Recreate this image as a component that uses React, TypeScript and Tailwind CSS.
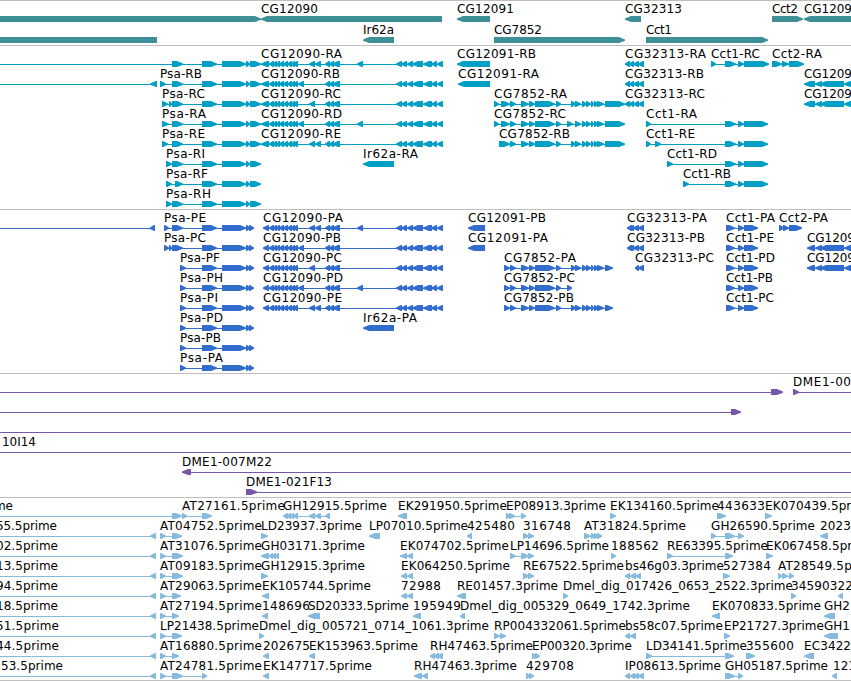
type Direction = "left" | "right" | "none";

interface Feature {
    label?: string;
    // label start and label end, in pixels of the view
    at?: [number, number];
    dir: Direction;
    blocks: number[][];
    // extent of the intron line, when it runs past the blocks
    span?: [number, number];
}

interface TrackProps {
    rows: Feature[][];
    color: string;
    rowHeight: string;
    className?: string;
}

const VIEW_WIDTH = 851;

const f = (label: string, start: number, end: number, dir: Direction, blocks: number[][], span?: [number, number]): Feature => ({
    label, at: [start, end], dir, blocks, span,
});

const bare = (dir: Direction, blocks: number[][], span?: [number, number]): Feature => ({ dir, blocks, span });

// ---- shared exon sets ----
const psaTail = [[202, 217], [222, 246], [246, 250], [250, 261]];
const psaCds = [[202, 217], [222, 246], [246, 250], [249, 254]];
const cgHead = [[269, 274], [273, 277], [276, 280], [279, 284], [283, 288], [287, 292], [291, 295], [293, 298]];
const cgMid = [[325, 330], [329, 334], [332, 340]];
const cgTail = [[396, 402], [401, 407], [407, 413], [412, 423], [423, 432], [431, 437], [437, 443]];
const cgA = [...cgHead, [309, 315], [315, 321], ...cgMid, [357, 363], ...cgTail];
const cgB = [...cgHead, [298, 304], ...cgMid, ...cgTail];
const cgC = [...cgHead, [309, 315], ...cgMid, ...cgTail];
const cgD = [...cgHead, [298, 304], ...cgMid, [357, 363], ...cgTail];
const cgE = [...cgHead, [309, 315], [315, 321], ...cgMid, ...cgTail];
const cg7852Mid = [[510, 516], [521, 529], [529, 535], [535, 555], [556, 561]];
const cg7852Tail = [[575, 581], [582, 587], [586, 591], [591, 594], [594, 598], [597, 604]];
const cg32313 = [[625, 630], [629, 634], [633, 639], [638, 644]];
const cct1Tail = [[725, 736], [738, 744], [744, 768]];
const cct1Cds = [[726, 735], [738, 744], [744, 758]];
const cg1209 = [[815, 822], [820, 844], [844, 856]];

const genes: Feature[][] = [
    [
        bare("right", [[-10, 261]]),
        f("CG12090", 261, 318, "left", [[261, 442]]),
        f("CG12091", 457, 514, "left", [[457, 490]]),
        f("CG32313", 625, 682, "left", [[625, 641]]),
        f("Cct2", 772, 798, "right", [[772, 803]]),
        f("CG1209", 804, 852, "left", [[804, 870]]),
    ],
    [
        bare("none", [[-10, 157]]),
        f("Ir62a", 363, 394, "left", [[363, 394]]),
        f("CG7852", 494, 542, "right", [[494, 625]]),
        f("Cct1", 646, 672, "right", [[646, 768]]),
    ],
];

const transcripts: Feature[][] = [
    [
        bare("right", [[172, 183], ...psaTail], [-5, 261]),
        f("CG12090-RA", 261, 342, "left", [[261, 269], ...cgA]),
        f("CG12091-RB", 457, 536, "left", [[457, 490]]),
        f("CG32313-RA", 625, 706, "left", cg32313),
        f("Cct1-RC", 711, 760, "right", [[711, 716], [725, 736], [738, 744], [744, 769]]),
        f("Cct2-RA", 772, 822, "right", [[772, 782], [782, 789], [789, 804]]),
    ],
    [
        bare("left", [[150, 157]], [-5, 157]),
        f("Psa-RB", 160, 202, "right", [[160, 166], [172, 183], ...psaTail]),
        f("CG12090-RB", 261, 340, "left", [[261, 269], ...cgB]),
        f("CG12091-RA", 458, 539, "left", [[458, 490]]),
        f("CG32313-RB", 625, 704, "left", cg32313),
        f("CG1209", 804, 852, "left", [[804, 815], ...cg1209]),
    ],
    [
        f("Psa-RC", 162, 205, "right", [[162, 168], [169, 172], [172, 183], ...psaTail]),
        f("CG12090-RC", 261, 341, "left", [[261, 269], ...cgC]),
        f("CG7852-RA", 494, 567, "right", [[494, 499], [501, 510], ...cg7852Mid, [571, 576], ...cg7852Tail, [605, 625]]),
        f("CG32313-RC", 625, 705, "left", cg32313),
        f("CG1209", 804, 852, "left", [[804, 815], ...cg1209]),
    ],
    [
        f("Psa-RA", 162, 206, "right", [[162, 169], [172, 183], ...psaTail]),
        f("CG12090-RD", 261, 342, "left", [[261, 269], ...cgD]),
        f("CG7852-RC", 494, 566, "right", [[494, 499], [501, 510], ...cg7852Mid, [567, 573], ...cg7852Tail, [605, 625]]),
        f("Cct1-RA", 646, 697, "right", [[646, 651], ...cct1Tail]),
    ],
    [
        f("Psa-RE", 162, 205, "right", [[162, 168], [172, 183], ...psaTail]),
        f("CG12090-RE", 261, 341, "left", [[261, 269], ...cgE]),
        f("CG7852-RB", 499, 570, "right", [[499, 510], ...cg7852Mid, [571, 576], ...cg7852Tail, [605, 625]]),
        f("Cct1-RE", 646, 695, "right", [[646, 651], [655, 661], ...cct1Tail]),
    ],
    [
        f("Psa-RI", 166, 205, "right", [[166, 172], [172, 183], ...psaTail]),
        f("Ir62a-RA", 363, 418, "left", [[363, 394]]),
        f("Cct1-RD", 667, 717, "right", [[667, 673], ...cct1Tail]),
    ],
    [
        f("Psa-RF", 166, 208, "right", [[166, 172], [175, 183], ...psaTail]),
        f("Cct1-RB", 683, 731, "right", [[683, 689], ...cct1Tail]),
    ],
    [f("Psa-RH", 166, 211, "right", [[166, 172], [172, 183], ...psaTail])],
];

const proteins: Feature[][] = [
    [
        bare("left", [[150, 155]], [-5, 155]),
        f("Psa-PE", 164, 206, "right", [[164, 169], [172, 183], ...psaCds]),
        f("CG12090-PA", 263, 343, "left", [[263, 269], ...cgA]),
        f("CG12091-PB", 468, 546, "left", [[468, 485]]),
        f("CG32313-PA", 627, 707, "left", [[627, 632], ...cg32313.slice(1)]),
        f("Cct1-PA", 726, 775, "right", cct1Cds),
        f("Cct2-PA", 779, 828, "right", [[779, 784], [783, 789], [789, 802]]),
    ],
    [
        f("Psa-PC", 164, 206, "right", [[164, 169], [169, 172], [172, 183], ...psaCds]),
        f("CG12090-PB", 263, 341, "left", [[263, 269], ...cgB]),
        f("CG12091-PA", 468, 548, "left", [[468, 485]]),
        f("CG32313-PB", 627, 705, "left", [[627, 632], ...cg32313.slice(1)]),
        f("Cct1-PE", 726, 774, "right", cct1Cds),
        f("CG1209", 807, 855, "left", [[807, 815], ...cg1209]),
    ],
    [
        f("Psa-PF", 180, 220, "right", [[180, 186], ...psaCds]),
        f("CG12090-PC", 263, 342, "left", [[263, 269], ...cgC]),
        f("CG7852-PA", 504, 576, "right", [[504, 510], ...cg7852Mid, [571, 576], ...cg7852Tail, [605, 613]]),
        f("CG32313-PC", 635, 714, "left", [[635, 639], [638, 644]]),
        f("Cct1-PD", 726, 775, "right", cct1Cds),
        f("CG1209", 807, 855, "left", [[807, 815], ...cg1209]),
    ],
    [
        f("Psa-PH", 180, 223, "right", [[180, 186], ...psaCds]),
        f("CG12090-PD", 263, 343, "left", [[263, 269], ...cgD]),
        f("CG7852-PC", 504, 575, "right", [[504, 510], ...cg7852Mid, [567, 572]]),
        f("Cct1-PB", 726, 773, "right", cct1Cds),
    ],
    [
        f("Psa-PI", 180, 218, "right", [[180, 186], ...psaCds]),
        f("CG12090-PE", 263, 342, "left", [[263, 269], ...cgE]),
        f("CG7852-PB", 504, 574, "right", [[504, 510], ...cg7852Mid, [571, 576], ...cg7852Tail, [605, 613]]),
        f("Cct1-PC", 726, 774, "right", cct1Cds),
    ],
    [
        f("Psa-PD", 180, 223, "right", [[180, 186], ...psaCds]),
        f("Ir62a-PA", 363, 417, "left", [[363, 394]]),
    ],
    [f("Psa-PB", 180, 221, "right", [[180, 186], ...psaCds])],
    [f("Psa-PA", 180, 223, "right", [[180, 186], ...psaCds])],
];

const clones: Feature[][] = [
    [
        bare("right", [[771, 783]], [-5, 783]),
        f("DME1-00", 793, 851, "right", [[793, 799]], [793, 860]),
    ],
    [bare("right", [[731, 741]], [-5, 741])],
    [bare("none", [], [-5, 860])],
    [f("10I14", 2, 36, "none", [], [-5, 860])],
    [f("DME1-007M22", 182, 272, "left", [[182, 191]], [182, 860])],
    [f("DME1-021F13", 246, 332, "right", [[246, 257]], [246, 860])],
];

const ests: Feature[][] = [
    [
        f("me", -6, 13, "right", [[172, 182], [182, 187], [202, 212]], [-5, 212]),
        f("AT27161.5prime", 182, 285, "none", []),
        f("GH12915.5prime", 283, 387, "left", [[283, 288], [287, 291], [290, 294], [293, 298], [309, 315], [315, 321], [325, 330]]),
        f("EK291950.5prime", 398, 507, "left", [[398, 407]]),
        f("EP08913.3prime", 506, 606, "right", [[506, 510], [509, 515], [521, 526]]),
        f("EK134160.5prime", 610, 719, "right", [[610, 616]]),
        f("443633", 717, 765, "right", [[717, 726]]),
        f("EK070439.5prime", 765, 874, "right", [[765, 772]]),
    ],
    [
        f("55.5prime", -4, 57, "left", [[150, 156]], [-5, 156]),
        f("AT04752.5prime", 160, 262, "right", [[160, 166], [172, 182]]),
        f("LD23937.3prime", 261, 362, "right", [[261, 268]]),
        f("LP07010.5prime", 369, 468, "left", [[369, 380]]),
        f("425480", 467, 515, "left", [[467, 472]]),
        f("316748", 523, 571, "right", [[523, 529], [528, 534]]),
        f("AT31824.5prime", 584, 686, "right", [[584, 591], [591, 595], [594, 598], [597, 602]]),
        f("GH26590.5prime", 711, 815, "right", [[711, 716], [725, 735], [738, 744]]),
        f("2023", 820, 851, "left", [[820, 828]]),
    ],
    [
        f("02.5prime", -4, 58, "left", [[150, 156]], [-5, 156]),
        f("AT31076.5prime", 160, 262, "right", [[160, 166], [172, 183]]),
        f("GH03171.3prime", 261, 365, "left", [[261, 269], [269, 273], [272, 276], [275, 279]]),
        f("EK074702.5prime", 400, 509, "left", [[400, 407], [407, 413]]),
        f("LP14696.5prime", 510, 609, "right", [[510, 516], [521, 529], [528, 534]]),
        f("188562", 611, 659, "right", [[611, 616]]),
        f("RE63395.5prime", 667, 768, "right", [[667, 673], [725, 733]]),
        f("EK067458.5prime", 766, 875, "right", [[766, 773]]),
    ],
    [
        f("13.5prime", -4, 58, "left", [[150, 156]], [-5, 156]),
        f("AT09183.5prime", 160, 262, "right", [[160, 166], [172, 183]]),
        f("GH12915.3prime", 261, 365, "right", [[261, 268]]),
        f("EK064250.5prime", 401, 510, "left", [[401, 407], [407, 413]]),
        f("RE67522.5prime", 523, 624, "right", [[523, 529], [528, 534]]),
        f("bs46g03.3prime", 625, 724, "left", [[625, 630], [630, 636], [635, 641]]),
        f("527384", 723, 771, "right", [[723, 730]]),
        f("AT28549.5prime", 778, 880, "right", [[778, 782], [782, 788], [789, 794]]),
    ],
    [
        f("94.5prime", -4, 58, "left", [[150, 156]], [-5, 156]),
        f("AT29063.5prime", 160, 262, "right", [[160, 166], [172, 181]]),
        f("EK105744.5prime", 262, 371, "left", [[262, 269]]),
        f("72988", 401, 441, "left", [[401, 407], [407, 413]]),
        f("RE01457.3prime", 457, 558, "left", [[457, 466]]),
        f("Dmel_dig_017426_0653_2522.3prime", 563, 793, "right", [[563, 568]]),
        f("34590322", 791, 853, "right", [[791, 796]]),
        bare("left", [[838, 843]]),
    ],
    [
        f("18.5prime", -4, 58, "left", [[150, 156]], [-5, 156]),
        f("AT27194.5prime", 160, 262, "right", [[160, 166], [172, 179]]),
        f("148696", 262, 310, "left", [[262, 268]]),
        f("SD20333.5prime", 308, 409, "left", [[308, 320]]),
        f("195949", 413, 461, "left", [[413, 421]]),
        f("Dmel_dig_005329_0649_1742.3prime", 460, 690, "left", [[460, 465]]),
        f("EK070833.5prime", 712, 821, "left", [[712, 720]]),
        f("GH2", 824, 850, "left", [[824, 835]]),
    ],
    [
        f("51.5prime", -4, 59, "left", [[150, 156]], [-5, 156]),
        f("LP21438.5prime", 160, 259, "right", [[160, 166], [172, 182]]),
        f("Dmel_dig_005721_0714_1061.3prime", 259, 489, "right", [[259, 264]]),
        f("RP004332061.5prime", 494, 626, "right", [[494, 500], [500, 506]]),
        f("bs58c07.5prime", 625, 723, "left", [[625, 630], [630, 636]]),
        f("EP21727.3prime", 724, 824, "right", [[724, 730]]),
        f("GH1", 824, 850, "left", [[824, 838]]),
    ],
    [
        f("44.5prime", -4, 59, "left", [[150, 156]], [-5, 156]),
        f("AT16880.5prime", 160, 262, "right", [[160, 166], [172, 179]]),
        f("202675", 263, 310, "left", [[263, 269]]),
        f("EK153963.5prime", 309, 418, "left", [[309, 315]]),
        f("RH47463.5prime", 430, 533, "left", [[430, 435], [434, 439], [437, 443]]),
        f("EP00320.3prime", 532, 632, "right", [[532, 536], [535, 540]]),
        f("LD34141.5prime", 646, 747, "right", [[646, 652], [725, 734]]),
        f("355600", 746, 794, "right", [[746, 755]]),
        f("EC3422", 804, 851, "left", [[804, 814]]),
    ],
    [
        f("53.5prime", 1, 63, "left", [[150, 156]], [-5, 156]),
        f("AT24781.5prime", 160, 262, "right", [[160, 166], [172, 183], [202, 207]]),
        f("EK147717.5prime", 263, 372, "left", [[263, 269]]),
        f("RH47463.3prime", 414, 517, "left", [[414, 422], [422, 428]]),
        f("429708", 526, 574, "right", [[526, 530], [529, 534]]),
        f("IP08613.5prime", 625, 721, "left", [[625, 630], [630, 635], [633, 639], [638, 644]]),
        f("GH05187.5prime", 725, 828, "right", [[725, 735], [738, 743]]),
        f("121", 833, 856, "left", [[832, 837]]),
    ],
];

const blockPath = (start: number, end: number, dir: Direction) => {
    const tip = Math.min(end - start - 1, 6);
    if (dir === "right") {
        return `M${start} 15H${end - tip}L${end} 17.4V18.8L${end - tip} 21H${start}Z`;
    }
    if (dir === "left") {
        return `M${end} 15H${start + tip}L${start} 17.4V18.8L${start + tip} 21H${end}Z`;
    }
    return `M${start} 15H${end}V21H${start}Z`;
};

const FeatureGlyph = ({ feature }: { feature: Feature }) => {
    const { label, at, dir, blocks, span } = feature;
    const from = span ? span[0] : blocks.length > 1 ? blocks[0][0] : 0;
    const to = span ? span[1] : blocks.length > 1 ? blocks[blocks.length - 1][1] : 0;

    return (
        <g>
            {to > from && <rect x={from} y={18} width={to - from - 1} height={1} />}
            {blocks.map(([start, end], i) => (
                <path key={i} d={blockPath(start, end, dir)} />
            ))}
            {label && at && (
                <text x={at[0]} y={12} textLength={at[1] - at[0]} className="fill-black">
                    {label}
                </text>
            )}
        </g>
    );
};

// glyphs hang one pixel below their row, so the rows must not clip
const Track = ({ rows, color, rowHeight, className = "" }: TrackProps) => (
    <section className={`border-t border-[#bfbfbf] ${color} ${className}`}>
        {rows.map((features, i) => (
            <svg key={i} width={VIEW_WIDTH} className={`block overflow-visible text-[12px] ${rowHeight}`}>
                {features.map((feature, j) => (
                    <FeatureGlyph key={j} feature={feature} />
                ))}
            </svg>
        ))}
    </section>
);

export default function App() {
    return (
        <main className="flex h-[681px] w-[851px] flex-col overflow-hidden border-b border-[#bfbfbf] bg-white font-['DejaVu_Sans',sans-serif]">
            <Track rows={genes} color="fill-[#3f8f96]" rowHeight="h-[21px]" className="pb-0.5" />
            <Track rows={transcripts} color="fill-[#009fc3]" rowHeight="h-5" className="pb-[3px]" />
            <Track rows={proteins} color="fill-[#326ccc]" rowHeight="h-5" className="pb-[3px]" />
            <Track rows={clones} color="fill-[#7758a8]" rowHeight="h-5" className="pb-[3px]" />
            <Track rows={ests} color="fill-[#87bbdd]" rowHeight="h-5" />
        </main>
    );
}
